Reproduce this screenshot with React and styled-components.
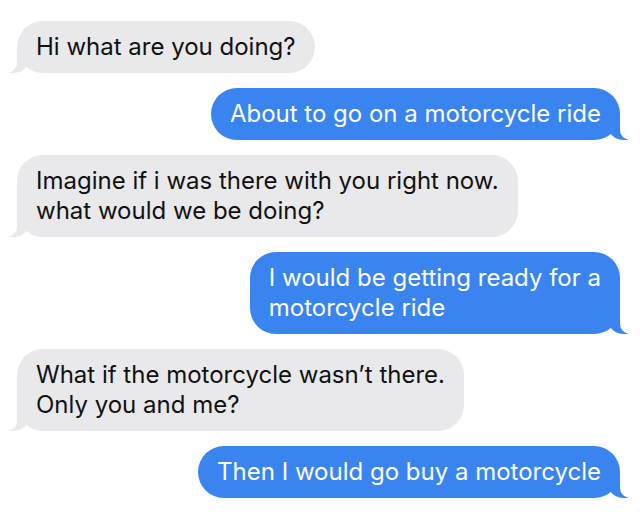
import React from 'react';
import styled, { createGlobalStyle, css } from 'styled-components';

const messages = [
  { from: 'them', lines: ['Hi what are you doing?'] },
  { from: 'me', lines: ['About to go on a motorcycle ride'] },
  { from: 'them', lines: ['Imagine if i was there with you right now.', 'what would we be doing?'] },
  { from: 'me', lines: ['I would be getting ready for a', 'motorcycle ride'] },
  { from: 'them', lines: ['What if the motorcycle wasn\u2019t there.', 'Only you and me?'] },
  { from: 'me', lines: ['Then I would go buy a motorcycle'] },
];

export default function App() {
  return (
    <>
      <GlobalStyle />
      <Thread>
        {messages.map((m, i) => (
          <Bubble key={i} $sent={m.from === 'me'}>
            {m.lines.map((line, j) => (
              <Line key={j}>{line}</Line>
            ))}
          </Bubble>
        ))}
      </Thread>
    </>
  );
}

const GlobalStyle = createGlobalStyle`
  html, body {
    margin: 0;
    background: #ffffff;
  }
  body {
    font-family: "Inter", "Liberation Sans", sans-serif;
  }
`;

const Thread = styled.div`
  display: flex;
  flex-direction: column;
  gap: 15px;
  padding: 21px 20px 0 17px;
`;

const Bubble = styled.div`
  position: relative;
  box-sizing: border-box;
  padding: 11px 19px 11px 19px;
  border-radius: 26px;
  font-size: 24px;
  line-height: 30px;

  &::before,
  &::after {
    content: "";
    position: absolute;
    bottom: 0;
    height: 25px;
  }

  ${p => p.$sent ? css`
    align-self: flex-end;
    background: #3a84ef;
    color: #ffffff;
    &::before {
      right: -8px;
      width: 20px;
      background: #3a84ef;
      border-bottom-left-radius: 16px 14px;
    }
    &::after {
      right: -26px;
      width: 26px;
      background: #ffffff;
      border-bottom-left-radius: 10px;
    }
  ` : css`
    align-self: flex-start;
    background: #e9e9eb;
    color: #111111;
    &::before {
      left: -8px;
      width: 20px;
      background: #e9e9eb;
      border-bottom-right-radius: 16px 14px;
    }
    &::after {
      left: -26px;
      width: 26px;
      background: #ffffff;
      border-bottom-right-radius: 10px;
    }
  `}
`;

const Line = styled.div`
  position: relative;
  z-index: 1;
  white-space: nowrap;
`;
